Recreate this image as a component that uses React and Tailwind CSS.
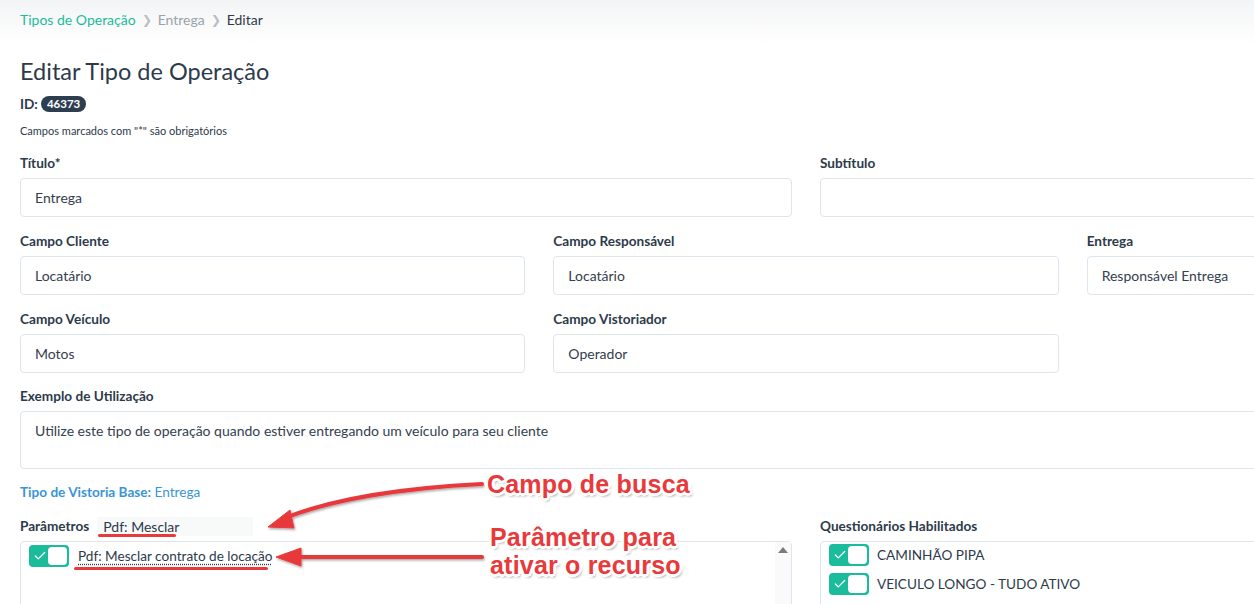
import { Check } from 'lucide-react';

const font = "font-['Lato','Noto_Sans',sans-serif]";

function Field({ label, value, className = '' }) {
  return (
    <div className={className}>
      <div className="text-[13.6px] font-bold leading-[18px] text-[#2d3a4b] mb-[6px]">{label}</div>
      <div className="h-[39px] rounded-[4px] border border-[#dfe5ec] bg-white px-[14px] flex items-center text-[14px] text-[#34404e]">
        {value}
      </div>
    </div>
  );
}

function Toggle() {
  return (
    <div className="w-[40px] h-[22px] rounded-[4px] bg-[#1abc9c] flex items-center pl-[4px] pr-[2px] shrink-0">
      <Check className="w-[14px] h-[14px] text-white" strokeWidth={2.2} />
      <div className="ml-auto w-[19px] h-[18px] rounded-[4px] bg-white" />
    </div>
  );
}

const noteText =
  "absolute font-['Liberation_Sans',Arial,sans-serif] font-bold text-[25px] leading-[28px] tracking-[0.2px] text-[#e8393b] [text-shadow:-2px_-2px_0_#fff,2px_-2px_0_#fff,-2px_2px_0_#fff,2px_2px_0_#fff,0_-3px_0_#fff,0_3px_0_#fff,-3px_0_0_#fff,3px_0_0_#fff,2px_3px_3px_rgba(0,0,0,0.45)] whitespace-nowrap";

export default function App() {
  return (
    <div className={`${font} relative w-[1254px] h-[604px] overflow-hidden bg-white`}>
      <div className="w-[1612px]">
        <div className="h-[44px] bg-gradient-to-b from-[#f3f4f5] to-white px-[20px] pt-[11px] flex items-start gap-[6px] text-[14px] leading-[18px]">
          <span className="text-[#1abc9c]">Tipos de Operação</span>
          <span className="text-[#b8bec5] text-[12px]">❯</span>
          <span className="text-[#9aa2ab]">Entrega</span>
          <span className="text-[#b8bec5] text-[12px]">❯</span>
          <span className="text-[#2d3a4b]">Editar</span>
        </div>

        <div className="px-[20px]">
          <h1 className="text-[23.5px] leading-[28px] text-[#2d3a4b] mt-[13px]">Editar Tipo de Operação</h1>
          <div className="mt-[10px] flex items-center gap-[3px] text-[13.6px] leading-[18px] font-bold text-[#2d3a4b]">
            <span>ID:</span>
            <span className="rounded-full bg-[#2c3e50] text-white text-[11.5px] leading-[16px] px-[6px]">46373</span>
          </div>
          <div className="mt-[11px] text-[11px] leading-[14px] text-[#2d3a4b]">Campos marcados com "*" são obrigatórios</div>

          <div className="mt-[16px] grid grid-cols-2 gap-x-[28px]">
            <Field label="Título*" value="Entrega" />
            <Field label="Subtítulo" value="" />
          </div>
          <div className="mt-[15px] grid grid-cols-3 gap-x-[28px] gap-y-[15px]">
            <Field label="Campo Cliente" value="Locatário" />
            <Field label="Campo Responsável" value="Locatário" />
            <Field label="Entrega" value="Responsável Entrega" />
            <Field label="Campo Veículo" value="Motos" />
            <Field label="Campo Vistoriador" value="Operador" />
          </div>

          <div className="mt-[14px]">
            <div className="text-[13.6px] font-bold leading-[18px] text-[#2d3a4b] mb-[6px]">Exemplo de Utilização</div>
            <div className="h-[58px] rounded-[4px] border border-[#dfe5ec] px-[14px] pt-[10px] text-[14px] leading-[18px] text-[#34404e]">
              Utilize este tipo de operação quando estiver entregando um veículo para seu cliente
            </div>
          </div>

          <div className="mt-[14px] text-[13.6px] leading-[18px] text-[#3a95d6]">
            <span className="font-bold">Tipo de Vistoria Base:</span> Entrega
          </div>

          <div className="mt-[15px] grid grid-cols-2 gap-x-[28px]">
            <div>
              <div className="flex items-center h-[20px]">
                <span className="text-[13.6px] font-bold text-[#2d3a4b]">Parâmetros</span>
                <div className="ml-[8px] w-[156px] h-[19px] bg-[#f8f9f9] px-[6px] text-[14px] leading-[19px] text-[#2d3a4b]">Pdf: Mesclar</div>
              </div>
              <div className="mt-[5px] h-[80px] rounded-[4px] border border-[#dfe5ec] flex">
                <div className="flex-1 pl-[8px] pt-[3px]">
                  <div className="flex items-center gap-[9px]">
                    <Toggle />
                    <span className="text-[13.6px] text-[#2d3a4b] underline decoration-dotted underline-offset-[3px]">Pdf: Mesclar contrato de locação</span>
                  </div>
                </div>
                <div className="w-[16px] bg-[#fafafa] flex justify-center pt-[5px]">
                  <div className="w-0 h-0 border-x-[5px] border-x-transparent border-b-[6px] border-b-[#7c7c7c]" />
                </div>
              </div>
            </div>
            <div>
              <div className="flex items-center h-[20px]">
                <span className="text-[13.6px] font-bold text-[#2d3a4b]">Questionários Habilitados</span>
              </div>
              <div className="mt-[5px] h-[80px] rounded-[4px] border border-[#dfe5ec] pl-[8px] pt-[2px] flex flex-col gap-[7px]">
                <div className="flex items-center gap-[8px]">
                  <Toggle />
                  <span className="text-[13.6px] text-[#2d3a4b]">CAMINHÃO PIPA</span>
                </div>
                <div className="flex items-center gap-[8px]">
                  <Toggle />
                  <span className="text-[13.6px] text-[#2d3a4b]">VEICULO LONGO - TUDO ATIVO</span>
                </div>
              </div>
            </div>
          </div>
        </div>
      </div>

      {/* annotations */}
      <div className="absolute left-[98px] top-[534px] w-[78px] h-[3px] rounded-full bg-[#e8393b]" />
      <div className="absolute left-[74px] top-[567px] w-[194px] h-[3px] rounded-full bg-[#e8393b]" />
      <svg className="absolute left-0 top-0" width="1254" height="604" viewBox="0 0 1254 604">
        <defs>
          <filter id="sh" x="-10%" y="-50%" width="120%" height="200%">
            <feDropShadow dx="1" dy="1.5" stdDeviation="1" floodColor="#000" floodOpacity="0.35" />
          </filter>
        </defs>
        <g filter="url(#sh)" fill="#e8393b" stroke="#e8393b">
          <path d="M482 484 C 400 488, 330 500, 285 518" fill="none" strokeWidth="4" strokeLinecap="round" />
          <path d="M268 527 L290 510 L294 528 Z" strokeWidth="1" strokeLinejoin="round" />
          <path d="M482 557 L 295 557" fill="none" strokeWidth="4" strokeLinecap="round" />
          <path d="M276 557 L301 548 L301 566 Z" strokeWidth="1" strokeLinejoin="round" />
        </g>
      </svg>
      <div className={`${noteText} left-[487px] top-[470px]`}>Campo de busca</div>
      <div className={`${noteText} left-[490px] top-[523px]`}>
        Parâmetro para
        <br />
        ativar o recurso
      </div>
    </div>
  );
}
